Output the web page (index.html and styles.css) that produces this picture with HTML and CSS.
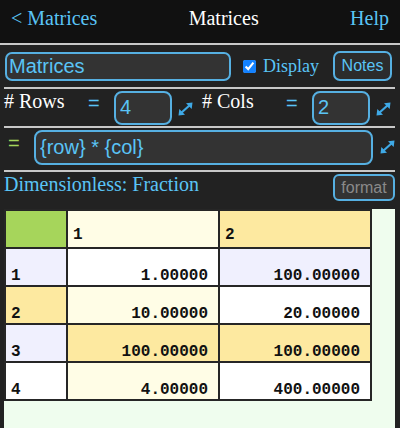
FILE: index.html
```html
<!DOCTYPE html>
<html lang="en">
<head>
<meta charset="utf-8">
<title>Matrices</title>
<link rel="stylesheet" href="styles.css">
</head>
<body>
<header class="nav">
  <a class="back" href="#">&lt; Matrices</a>
  <h1 class="title">Matrices</h1>
  <a class="help" href="#">Help</a>
</header>
<main class="content">
  <div class="row row-name">
    <input class="field name" type="text" value="Matrices">
    <label class="display"><input class="check" type="checkbox" checked><span>Display</span></label>
    <button class="btn notes">Notes</button>
  </div>
  <div class="row row-dims">
    <div class="dim">
      <span class="label"># Rows</span>
      <span class="eq">=</span>
      <input class="field num" type="text" value="4">
      <svg class="expand" viewBox="0 0 15 14" width="15" height="14"><path d="M3 11 L12 3" stroke="currentColor" stroke-width="2.2" fill="none"/><path d="M0.5 13.5 L1.3 7 L7 12.7 Z" fill="currentColor"/><path d="M14.5 0.5 L8 1.3 L13.7 7 Z" fill="currentColor"/></svg>
    </div>
    <div class="dim">
      <span class="label"># Cols</span>
      <span class="eq">=</span>
      <input class="field num" type="text" value="2">
      <svg class="expand" viewBox="0 0 15 14" width="15" height="14"><path d="M3 11 L12 3" stroke="currentColor" stroke-width="2.2" fill="none"/><path d="M0.5 13.5 L1.3 7 L7 12.7 Z" fill="currentColor"/><path d="M14.5 0.5 L8 1.3 L13.7 7 Z" fill="currentColor"/></svg>
    </div>
  </div>
  <div class="row row-formula">
    <span class="eq green">=</span>
    <input class="field formula" type="text" value="{row} * {col}">
    <svg class="expand" viewBox="0 0 15 14" width="15" height="14"><path d="M3 11 L12 3" stroke="currentColor" stroke-width="2.2" fill="none"/><path d="M0.5 13.5 L1.3 7 L7 12.7 Z" fill="currentColor"/><path d="M14.5 0.5 L8 1.3 L13.7 7 Z" fill="currentColor"/></svg>
  </div>
  <div class="row-units">
    <span class="units">Dimensionless: Fraction</span>
    <button class="btn format">format</button>
  </div>
  <div class="grid-wrap">
    <table class="grid">
      <colgroup><col class="c0"><col class="c1"><col class="c2"></colgroup>
      <tr class="head">
        <td class="bg-green"></td>
        <td class="bg-ly left">1</td>
        <td class="bg-y left">2</td>
      </tr>
      <tr>
        <td class="bg-lav left">1</td>
        <td class="bg-w">1.00000</td>
        <td class="bg-lav">100.00000</td>
      </tr>
      <tr>
        <td class="bg-y left">2</td>
        <td class="bg-ly">10.00000</td>
        <td class="bg-w">20.00000</td>
      </tr>
      <tr>
        <td class="bg-lav left">3</td>
        <td class="bg-y">100.00000</td>
        <td class="bg-y">100.00000</td>
      </tr>
      <tr>
        <td class="bg-w left">4</td>
        <td class="bg-ly">4.00000</td>
        <td class="bg-w">400.00000</td>
      </tr>
    </table>
  </div>
</main>
</body>
</html>
```

FILE: styles.css
```css
* { box-sizing: border-box; }
html, body { margin: 0; height: 100%; }
body {
  background: #222;
  font-family: "Liberation Serif", serif;
  color: #fff;
  overflow: hidden;
}

.nav {
  height: 45px;
  background: #111;
  border-bottom: 2px solid #c8c8c8;
  display: flex;
  align-items: flex-start;
  padding: 7px 11px 0;
  font-size: 20px;
  line-height: 23px;
}
.nav .back, .nav .help { color: #5ac4f6; text-decoration: none; }
.nav .title {
  flex: 1;
  margin: 0;
  text-align: center;
  font-size: 20px;
  font-weight: normal;
  color: #fff;
}

.content {
  margin: 0 5px 0 4px;
  display: flex;
  flex-direction: column;
  height: calc(100% - 45px);
}

.row {
  display: flex;
  border-bottom: 2px solid #c8c8c8;
}

.field {
  background: #333;
  border: 2px solid #56b0e2;
  color: #5ac4f6;
  font-family: "Liberation Sans", Arial, sans-serif;
  font-size: 20px;
  outline: none;
  margin: 0;
}

.btn {
  background: #2c2c2c;
  border: 2px solid #56b0e2;
  border-radius: 7px;
  font-family: "Liberation Sans", Arial, sans-serif;
  font-size: 16px;
  padding: 0;
  margin: 0;
}

/* row 1 */
.row-name { height: 44px; align-items: center; }
.name {
  width: 226px;
  height: 29px;
  margin-left: 1px;
  border-radius: 7px;
  padding: 0 2px;
}
.display {
  display: flex;
  align-items: center;
  margin-left: 12px;
  color: #5ac4f6;
  font-size: 18px;
  line-height: 21px;
}
.check {
  width: 13px;
  height: 13px;
  margin: 0 7px 0 0;
  accent-color: #1482ff;
}
.notes {
  margin-left: auto;
  margin-right: 3px;
  width: 59px;
  height: 30px;
  color: #5ac4f6;
}

/* row 2 */
.row-dims {
  height: 39px;
  display: grid;
  grid-template-columns: 198px 1fr;
}
.dim {
  display: flex;
  align-items: center;
  height: 37px;
}
.label {
  align-self: flex-start;
  margin-top: 1px;
  font-size: 20px;
  line-height: 23px;
  width: 84px;
  color: #fff;
}
.eq {
  align-self: flex-start;
  margin-top: 3px;
  width: 26px;
  font-family: "Liberation Sans", Arial, sans-serif;
  font-size: 20px;
  line-height: 23px;
  color: #5ac4f6;
}
.num {
  width: 58px;
  height: 34px;
  border-radius: 8px;
  padding: 0 4px;
}
.expand {
  color: #3fa9e6;
  margin-left: 6px;
  margin-top: 2px;
  flex: none;
}

/* row 3 */
.row-formula {
  height: 44px;
  align-items: flex-start;
}
.eq.green {
  color: #a5d65c;
  width: 30px;
  padding-left: 4px;
  margin-top: 4px;
}
.formula {
  width: 339px;
  height: 35px;
  margin-top: 2px;
  border-radius: 8px;
  padding: 0 4px;
}
.row-formula .expand { margin-left: 7px; margin-top: 12px; }

/* row 4 */
.row-units {
  height: 37px;
  display: flex;
  align-items: flex-start;
}
.units {
  margin-top: 1px;
  color: #5ac4f6;
  font-size: 20px;
  line-height: 23px;
}
.format {
  margin-left: auto;
  margin-top: 2px;
  width: 62px;
  height: 27px;
  color: #8a8a8a;
  background: #333;
  border-radius: 6px;
}

/* table */
.grid-wrap {
  flex: 1;
  background: #effdee;
}
.grid {
  border-spacing: 0;
  table-layout: fixed;
  width: 368px;
  border-top: 2px solid #262626;
  border-left: 2px solid #262626;
  font-family: "Liberation Mono", "Courier New", monospace;
  font-weight: bold;
  font-size: 16px;
  color: #111;
}
.c0 { width: 62px; }
.c1 { width: 152px; }
.c2 { width: 152px; }
.grid td {
  height: 38px;
  border-right: 2px solid #262626;
  border-bottom: 2px solid #262626;
  vertical-align: bottom;
  text-align: right;
  padding: 0 10px 0 5px;
  line-height: 18px;
}
.grid td.left { text-align: left; }
.grid .head td { padding-bottom: 3px; }

.bg-green { background: #a6d55b; }
.bg-ly { background: #fffde6; }
.bg-y { background: #fde9a0; }
.bg-lav { background: #f0f0fe; }
.bg-w { background: #fff; }
```
